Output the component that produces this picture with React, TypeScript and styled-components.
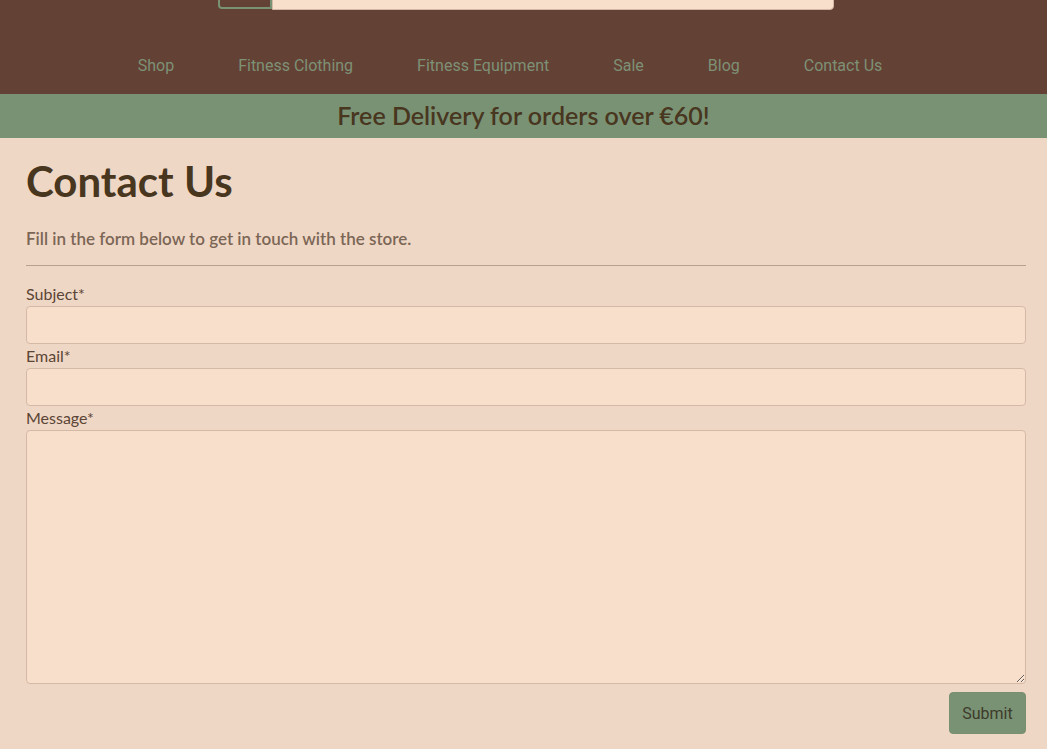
import React from "react";
import styled, { createGlobalStyle } from "styled-components";

const GlobalStyle = createGlobalStyle`
  html, body {
    margin: 0;
    padding: 0;
    background: #efd7c5;
    font-family: Lato, "Open Sans", sans-serif;
  }
  * {
    box-sizing: border-box;
  }
`;

const navLinks = [
  "Shop",
  "Fitness Clothing",
  "Fitness Equipment",
  "Sale",
  "Blog",
  "Contact Us",
];

const App: React.FC = () => {
  return (
    <>
      <GlobalStyle />
      <Header>
        <SearchRow>
          <SearchButton type="button" aria-label="search" />
          <SearchInput type="text" />
        </SearchRow>
        <Nav>
          {navLinks.map((link) => (
            <NavLink key={link} href="#">
              {link}
            </NavLink>
          ))}
        </Nav>
      </Header>
      <Banner>Free Delivery for orders over €60!</Banner>
      <Main>
        <Title>Contact Us</Title>
        <Intro>Fill in the form below to get in touch with the store.</Intro>
        <Divider />
        <Form onSubmit={(e) => e.preventDefault()}>
          <Label htmlFor="subject">Subject*</Label>
          <Input id="subject" type="text" />
          <Label htmlFor="email">Email*</Label>
          <Input id="email" type="email" />
          <Label htmlFor="message">Message*</Label>
          <TextArea id="message" />
          <Actions>
            <SubmitButton type="submit">Submit</SubmitButton>
          </Actions>
        </Form>
      </Main>
    </>
  );
};

const Header = styled.header`
  background: #644135;
  overflow: hidden;
  padding-bottom: 18px;
`;

const SearchRow = styled.div`
  display: flex;
  justify-content: center;
  height: 10px;
  align-items: flex-end;
  padding-left: 4px;
`;

const SearchButton = styled.button`
  width: 54px;
  height: 40px;
  flex-shrink: 0;
  background: #644135;
  border: 2px solid #7a9274;
  border-radius: 4px 0 0 4px;
  margin-bottom: 1px;
`;

const SearchInput = styled.input`
  width: 562px;
  height: 40px;
  background: #f7dfcc;
  border: 1px solid #d4b8a6;
  border-radius: 0 4px 4px 0;
`;

const Nav = styled.nav`
  display: flex;
  justify-content: center;
  gap: 64px;
  padding: 46px 27px 0 0;
`;

const NavLink = styled.a`
  font-family: Roboto, "Liberation Sans", sans-serif;
  font-size: 16px;
  line-height: 20px;
  color: #7d9175;
  text-decoration: none;
`;

const Banner = styled.div`
  background: #7a9274;
  color: #48361f;
  height: 44px;
  display: flex;
  align-items: center;
  justify-content: center;
  font-size: 25px;
  font-weight: 600;
  padding-bottom: 2px;
`;

const Main = styled.main`
  padding: 20px 21px 15px 26px;
`;

const Title = styled.h1`
  margin: 0;
  font-size: 42px;
  line-height: 46px;
  font-weight: 700;
  color: #48361f;
`;

const Intro = styled.p`
  margin: 25px 0 0;
  font-size: 17px;
  line-height: 20px;
  font-weight: 600;
  color: #7b6656;
`;

const Divider = styled.hr`
  margin: 16px 0 18px;
  border: none;
  border-top: 1px solid #b9a08e;
`;

const Form = styled.form`
  display: flex;
  flex-direction: column;
`;

const Label = styled.label`
  font-size: 16px;
  line-height: 20px;
  color: #5b4536;
  margin-bottom: 2px;
`;

const fieldStyles = `
  width: 100%;
  background: #f7dfcc;
  border: 1px solid #d5b9a7;
  border-radius: 4px;
  font-family: inherit;
  font-size: 16px;
  padding: 6px 10px;
`;

const Input = styled.input`
  ${fieldStyles}
  height: 38px;
  margin-bottom: 2px;
`;

const TextArea = styled.textarea`
  ${fieldStyles}
  height: 254px;
  resize: vertical;
  display: block;
`;

const Actions = styled.div`
  display: flex;
  justify-content: flex-end;
  margin-top: 8px;
`;

const SubmitButton = styled.button`
  width: 77px;
  height: 42px;
  background: #7a9274;
  color: #3d3b2c;
  border: 1px solid #78906f;
  border-radius: 4px;
  font-family: Roboto, "Liberation Sans", sans-serif;
  font-size: 16px;
`;

export default App;
